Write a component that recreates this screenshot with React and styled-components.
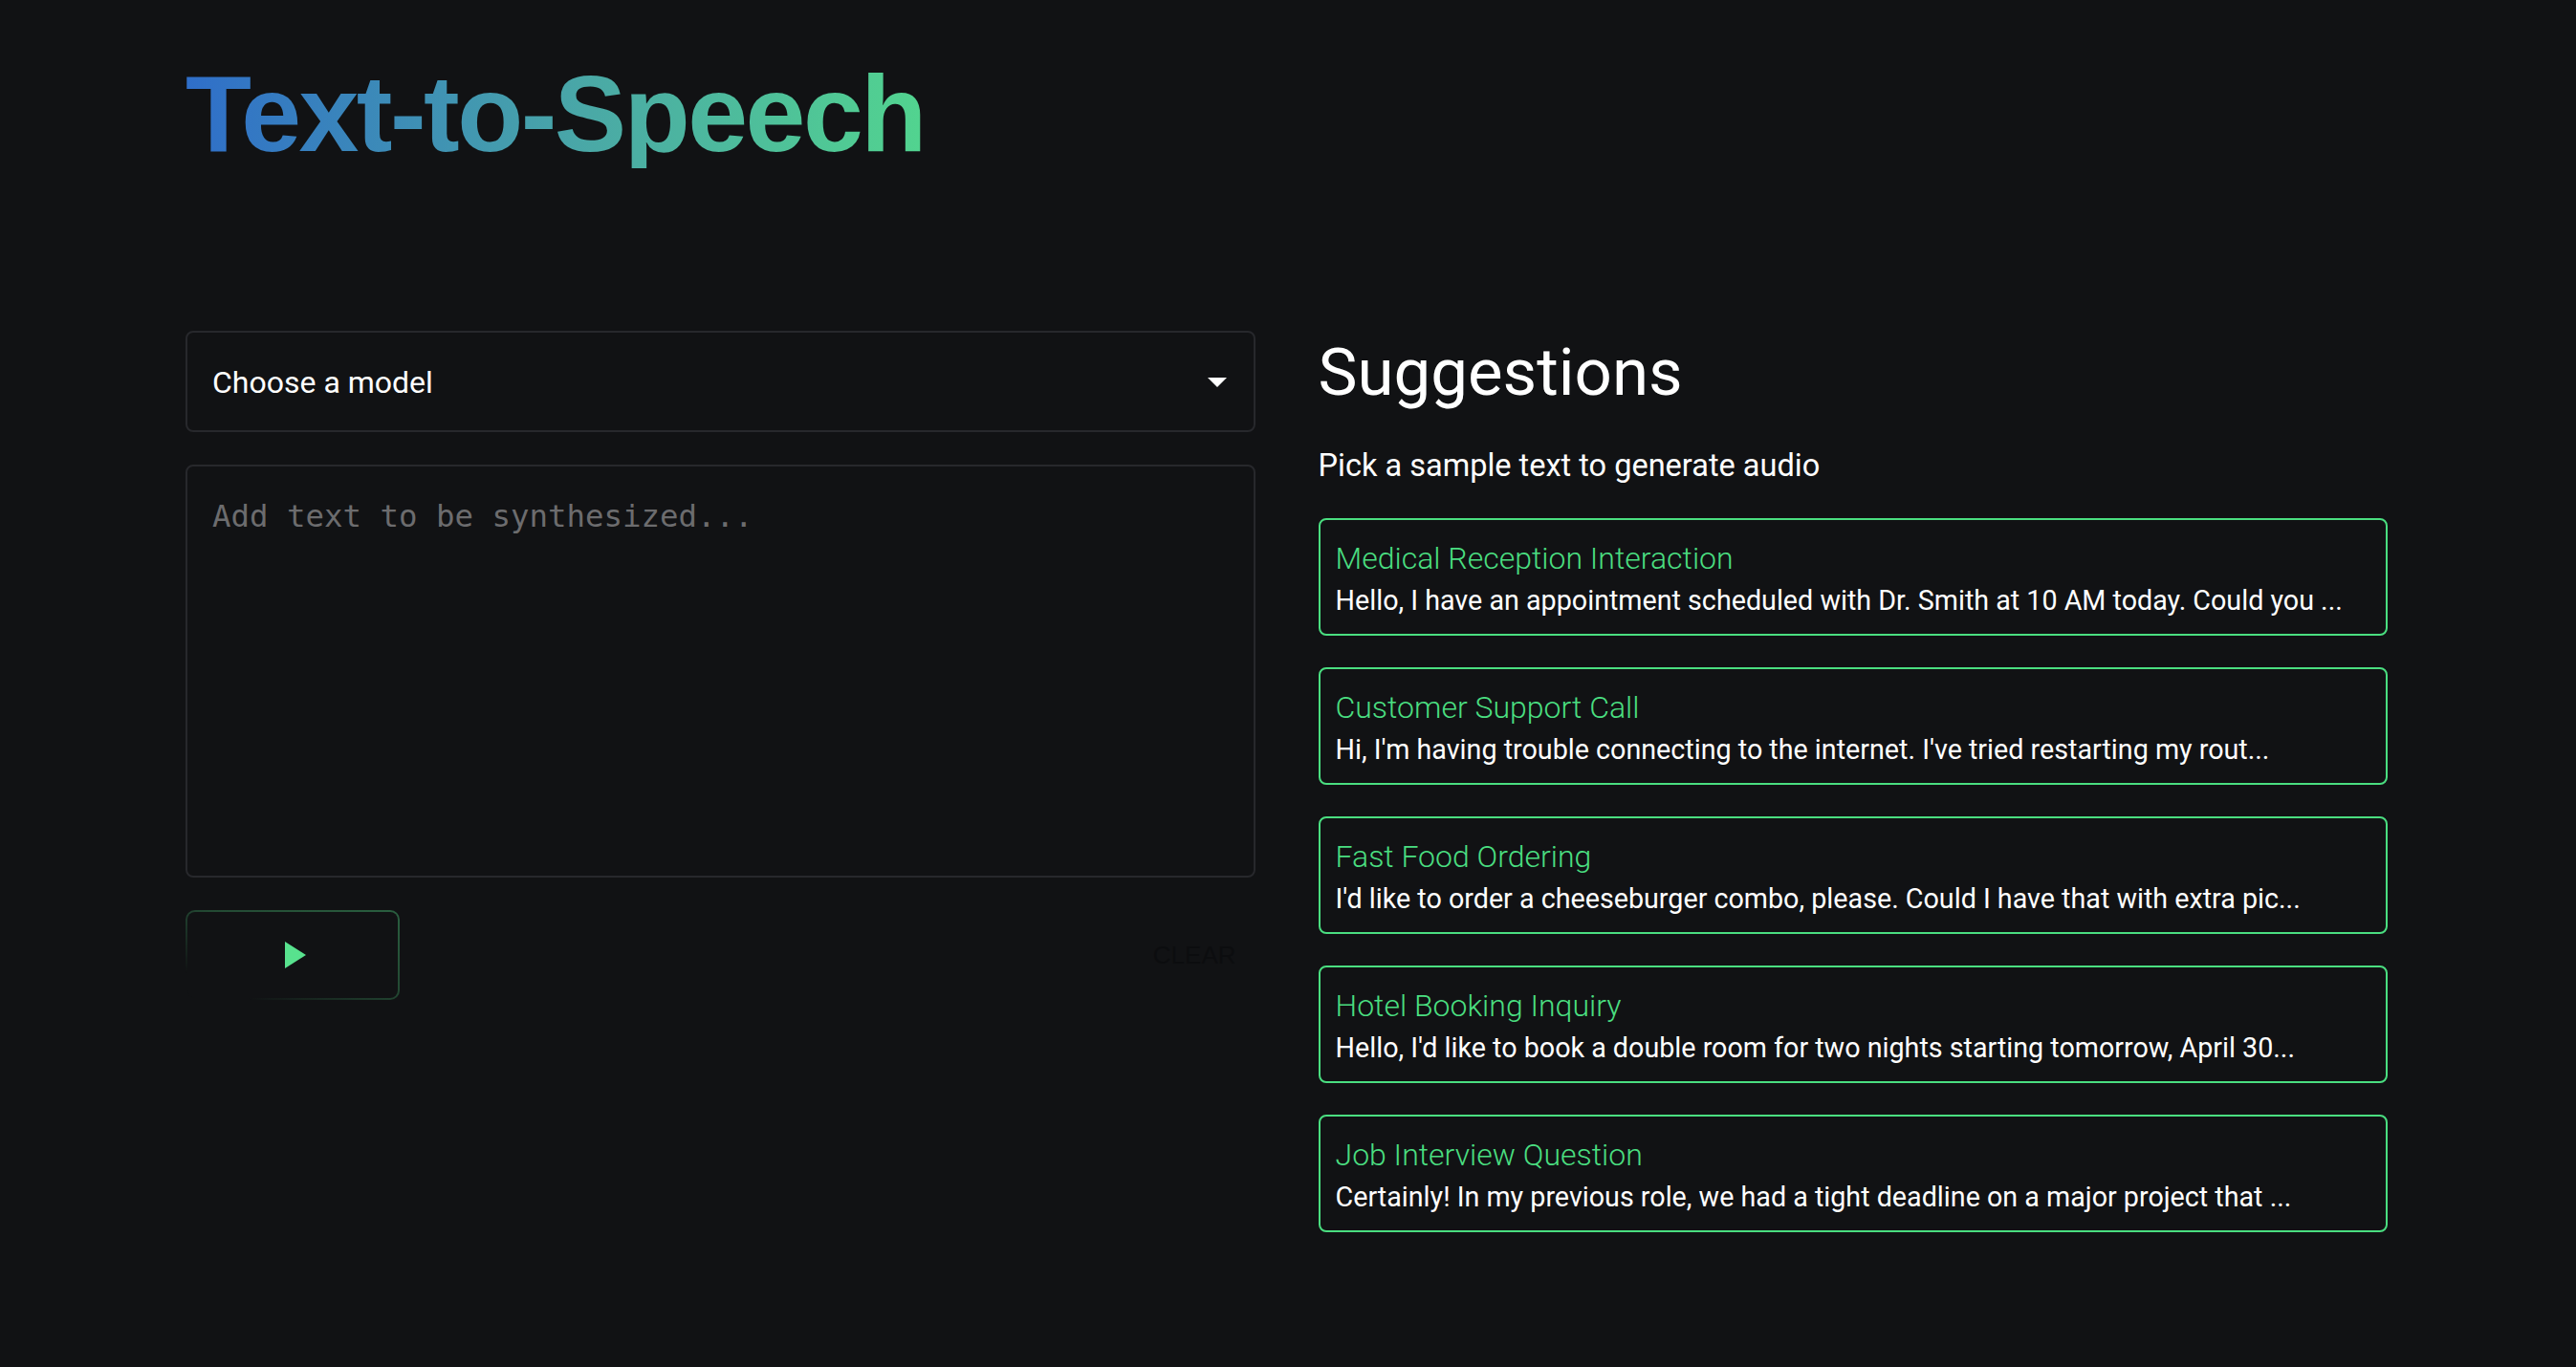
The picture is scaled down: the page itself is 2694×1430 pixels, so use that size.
import React from 'react'
import styled, { createGlobalStyle } from 'styled-components'

const GlobalStyle = createGlobalStyle`
  html, body {
    margin: 0;
    padding: 0;
    background-color: #111214;
  }
  body {
    font-family: Roboto, "Noto Sans", sans-serif;
    color: #ffffff;
  }
  * {
    box-sizing: border-box;
  }
`

const Page = styled.div`
  min-height: 1430px;
  padding: 63px 197px 0 194px;
`

const Title = styled.h1`
  display: inline-block;
  margin: 0;
  font-family: "Liberation Sans", Arial, sans-serif;
  font-weight: 700;
  font-size: 113px;
  line-height: 1;
  letter-spacing: -2.5px;
  background: linear-gradient(90deg, #2f6ec9 0%, #4aa9a6 55%, #52d48f 100%);
  -webkit-background-clip: text;
  background-clip: text;
  color: transparent;
`

const Columns = styled.div`
  display: grid;
  grid-template-columns: 1fr 1fr;
  column-gap: 66px;
  margin-top: 170px;
`

const Left = styled.div`
  display: flex;
  flex-direction: column;
  gap: 34px;
`

const Select = styled.div`
  display: flex;
  align-items: center;
  justify-content: space-between;
  height: 106px;
  padding: 2px 28px 0 26px;
  border: 2px solid #27282c;
  border-radius: 8px;
  font-size: 32px;
  color: #ffffff;
  cursor: pointer;
`

const TextArea = styled.textarea`
  display: block;
  width: 100%;
  height: 432px;
  padding: 33px 26px;
  resize: none;
  outline: none;
  background: transparent;
  border: 2px solid #27282c;
  border-radius: 8px;
  color: #e6e6e6;
  font-family: "DejaVu Sans Mono", "Liberation Mono", monospace;
  font-size: 32.4px;

  &::placeholder {
    color: #6c6c6e;
  }
`

const Actions = styled.div`
  display: flex;
  align-items: center;
  justify-content: space-between;
`

const PlayButton = styled.button`
  display: flex;
  align-items: center;
  justify-content: center;
  width: 224px;
  height: 94px;
  padding: 0 0 0 6px;
  border: 2px solid transparent;
  border-radius: 10px;
  background:
    linear-gradient(#111214, #111214) padding-box,
    linear-gradient(to bottom left, rgba(74, 190, 118, 0.45) 0%, rgba(74, 190, 118, 0.32) 45%, rgba(74, 190, 118, 0) 85%) border-box;
  cursor: pointer;
`

const ClearButton = styled.button`
  padding: 0 20px;
  border: none;
  background: transparent;
  font-family: "Liberation Sans", Arial, sans-serif;
  font-size: 26px;
  color: #0c0d0f;
  cursor: pointer;
`

const Right = styled.div`
  display: flex;
  flex-direction: column;
`

const Heading = styled.h2`
  margin: 3px 0 0;
  font-size: 69px;
  font-weight: 400;
  line-height: normal;
`

const Subtitle = styled.p`
  margin: 38px 0 36px;
  font-size: 32.5px;
  font-weight: 400;
  line-height: normal;
`

const CardList = styled.div`
  display: flex;
  flex-direction: column;
  gap: 33px;
`

const Card = styled.div`
  padding: 17px 16px 14px;
  border: 2px solid #4ade80;
  border-radius: 8px;
  cursor: pointer;
`

const CardTitle = styled.div`
  font-size: 32px;
  font-weight: 300;
  line-height: 46px;
  color: #4ade80;
`

const CardText = styled.div`
  font-size: 28.7px;
  font-weight: 400;
  line-height: 42px;
  color: #ffffff;
  white-space: nowrap;
`

const suggestions = [
  {
    title: 'Medical Reception Interaction',
    text: 'Hello, I have an appointment scheduled with Dr. Smith at 10 AM today. Could you ...',
  },
  {
    title: 'Customer Support Call',
    text: "Hi, I'm having trouble connecting to the internet. I've tried restarting my rout...",
  },
  {
    title: 'Fast Food Ordering',
    text: "I'd like to order a cheeseburger combo, please. Could I have that with extra pic...",
  },
  {
    title: 'Hotel Booking Inquiry',
    text: "Hello, I'd like to book a double room for two nights starting tomorrow, April 30...",
  },
  {
    title: 'Job Interview Question',
    text: 'Certainly! In my previous role, we had a tight deadline on a major project that ...',
  },
]

export default function App() {
  return (
    <>
      <GlobalStyle />
      <Page>
        <Title>Text-to-Speech</Title>
        <Columns>
          <Left>
            <Select>
              <span>Choose a model</span>
              <svg width="20" height="10" viewBox="0 0 20 10">
                <path d="M0 0 L20 0 L10 10 Z" fill="#ffffff" />
              </svg>
            </Select>
            <TextArea placeholder="Add text to be synthesized..." />
            <Actions>
              <PlayButton aria-label="Play">
                <svg width="22" height="28" viewBox="0 0 22 28">
                  <path d="M0 0 L22 14 L0 28 Z" fill="#58e28e" />
                </svg>
              </PlayButton>
              <ClearButton>CLEAR</ClearButton>
            </Actions>
          </Left>
          <Right>
            <Heading>Suggestions</Heading>
            <Subtitle>Pick a sample text to generate audio</Subtitle>
            <CardList>
              {suggestions.map(s => (
                <Card key={s.title}>
                  <CardTitle>{s.title}</CardTitle>
                  <CardText>{s.text}</CardText>
                </Card>
              ))}
            </CardList>
          </Right>
        </Columns>
      </Page>
    </>
  )
}
